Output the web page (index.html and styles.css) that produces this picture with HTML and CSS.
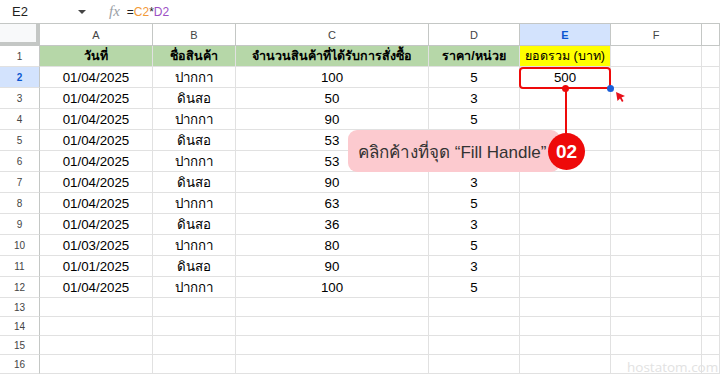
FILE: index.html
```html
<!DOCTYPE html>
<html lang="th">
<head>
  <meta charset="UTF-8" />
  <title>Fill Handle</title>
  <link rel="stylesheet" href="styles.css">
</head>
<body>

  <!-- formula bar -->
  <div class="formula-bar">
    <span class="name-box">E2</span>
    <span class="name-arrow"></span>
    <span class="fx">fx</span>
    <span class="formula">=<span class="ref-c">C2</span>*<span class="ref-d">D2</span></span>
  </div>

  <div class="sheet">
    <div class="row col-head">
      <div class="cell corner"></div>
      <div class="cell">A</div>
      <div class="cell">B</div>
      <div class="cell">C</div>
      <div class="cell">D</div>
      <div class="cell active">E</div>
      <div class="cell">F</div>
      <div class="cell"></div>
    </div>

    <div class="row head">
      <div class="cell rh">1</div>
      <div class="cell green">วันที่</div>
      <div class="cell green">ชื่อสินค้า</div>
      <div class="cell green">จำนวนสินค้าที่ได้รับการสั่งซื้อ</div>
      <div class="cell green">ราคา/หน่วย</div>
      <div class="cell yellow">ยอดรวม (บาท)</div>
      <div class="cell"></div>
      <div class="cell"></div>
    </div>

    <div class="row">
      <div class="cell rh active">2</div>
      <div class="cell">01/04/2025</div>
      <div class="cell">ปากกา</div>
      <div class="cell">100</div>
      <div class="cell">5</div>
      <div class="cell">500</div>
      <div class="cell"></div>
      <div class="cell"></div>
    </div>
    <div class="row">
      <div class="cell rh">3</div>
      <div class="cell">01/04/2025</div>
      <div class="cell">ดินสอ</div>
      <div class="cell">50</div>
      <div class="cell">3</div>
      <div class="cell"></div>
      <div class="cell"></div>
      <div class="cell"></div>
    </div>
    <div class="row">
      <div class="cell rh">4</div>
      <div class="cell">01/04/2025</div>
      <div class="cell">ปากกา</div>
      <div class="cell">90</div>
      <div class="cell">5</div>
      <div class="cell"></div>
      <div class="cell"></div>
      <div class="cell"></div>
    </div>
    <div class="row">
      <div class="cell rh">5</div>
      <div class="cell">01/04/2025</div>
      <div class="cell">ดินสอ</div>
      <div class="cell">53</div>
      <div class="cell">3</div>
      <div class="cell"></div>
      <div class="cell"></div>
      <div class="cell"></div>
    </div>
    <div class="row">
      <div class="cell rh">6</div>
      <div class="cell">01/04/2025</div>
      <div class="cell">ปากกา</div>
      <div class="cell">53</div>
      <div class="cell">5</div>
      <div class="cell"></div>
      <div class="cell"></div>
      <div class="cell"></div>
    </div>
    <div class="row">
      <div class="cell rh">7</div>
      <div class="cell">01/04/2025</div>
      <div class="cell">ดินสอ</div>
      <div class="cell">90</div>
      <div class="cell">3</div>
      <div class="cell"></div>
      <div class="cell"></div>
      <div class="cell"></div>
    </div>
    <div class="row">
      <div class="cell rh">8</div>
      <div class="cell">01/04/2025</div>
      <div class="cell">ปากกา</div>
      <div class="cell">63</div>
      <div class="cell">5</div>
      <div class="cell"></div>
      <div class="cell"></div>
      <div class="cell"></div>
    </div>
    <div class="row">
      <div class="cell rh">9</div>
      <div class="cell">01/04/2025</div>
      <div class="cell">ดินสอ</div>
      <div class="cell">36</div>
      <div class="cell">3</div>
      <div class="cell"></div>
      <div class="cell"></div>
      <div class="cell"></div>
    </div>
    <div class="row">
      <div class="cell rh">10</div>
      <div class="cell">01/03/2025</div>
      <div class="cell">ปากกา</div>
      <div class="cell">80</div>
      <div class="cell">5</div>
      <div class="cell"></div>
      <div class="cell"></div>
      <div class="cell"></div>
    </div>
    <div class="row">
      <div class="cell rh">11</div>
      <div class="cell">01/01/2025</div>
      <div class="cell">ดินสอ</div>
      <div class="cell">90</div>
      <div class="cell">3</div>
      <div class="cell"></div>
      <div class="cell"></div>
      <div class="cell"></div>
    </div>
    <div class="row">
      <div class="cell rh">12</div>
      <div class="cell">01/04/2025</div>
      <div class="cell">ปากกา</div>
      <div class="cell">100</div>
      <div class="cell">5</div>
      <div class="cell"></div>
      <div class="cell"></div>
      <div class="cell"></div>
    </div>

    <div class="row empty">
      <div class="cell rh">13</div>
      <div class="cell"></div><div class="cell"></div><div class="cell"></div>
      <div class="cell"></div><div class="cell"></div><div class="cell"></div><div class="cell"></div>
    </div>
    <div class="row empty">
      <div class="cell rh">14</div>
      <div class="cell"></div><div class="cell"></div><div class="cell"></div>
      <div class="cell"></div><div class="cell"></div><div class="cell"></div><div class="cell"></div>
    </div>
    <div class="row empty">
      <div class="cell rh">15</div>
      <div class="cell"></div><div class="cell"></div><div class="cell"></div>
      <div class="cell"></div><div class="cell"></div><div class="cell"></div><div class="cell"></div>
    </div>
    <div class="row empty">
      <div class="cell rh">16</div>
      <div class="cell"></div><div class="cell"></div><div class="cell"></div>
      <div class="cell"></div><div class="cell"></div><div class="cell"></div><div class="cell"></div>
    </div>

    <!-- annotation over the sheet -->
    <div class="select-box"></div>
    <div class="fill-handle"></div>
    <svg class="cursor" width="12" height="12" viewBox="0 0 12 12">
      <path d="M1 1 L10 5 L6.5 6.5 L8.5 10 L7 11 L5 7.5 L2.5 10 Z" fill="#e8101a"/>
    </svg>
    <div class="pin-dot"></div>
    <div class="pin-line"></div>
    <div class="callout">คลิกค้างที่จุด “Fill Handle”</div>
    <div class="step">02</div>

    <div class="watermark">hostatom.com</div>
  </div>

</body>
</html>
```

FILE: styles.css
```css
body {
  margin: 0;
  background: #fff;
  font-family: 'Liberation Sans', Arial, sans-serif;
  color: #000;
  width: 720px;
  height: 376px;
  overflow: hidden;
}

.formula-bar {
  height: 23px;
  display: flex;
  align-items: center;
  font-size: 13px;
  color: #1f1f1f;
  border-bottom: 1px solid #c4c7c5;
}

.name-box {
  width: 66px;
  padding-left: 12px;
}

.name-arrow {
  width: 0;
  height: 0;
  border-left: 4px solid transparent;
  border-right: 4px solid transparent;
  border-top: 4px solid #444;
  margin-right: 23px;
}

.fx {
  font-family: 'Liberation Serif', serif;
  font-style: italic;
  font-size: 15px;
  color: #9aa0a6;
  margin-right: 7px;
}

.formula {
  font-size: 12px;
}

.ref-c { color: #f29a38; }
.ref-d { color: #9c4fc4; }

.sheet {
  position: relative;
}

.row {
  display: grid;
  grid-template-columns: 40px 113px 83px 193px 91px 91px 91px 1fr;
  height: 21px;
}

.row.empty {
  height: 19px;
}

.cell {
  box-sizing: border-box;
  border-right: 1px solid #e1e1e1;
  border-bottom: 1px solid #e1e1e1;
  display: flex;
  align-items: center;
  justify-content: center;
  font-size: 13.3px;
  white-space: nowrap;
  overflow: hidden;
}

.col-head {
  height: 22px;
}

.col-head .cell {
  font-size: 11px;
  color: #444;
  border-color: #c4c7c5;
}

.col-head .corner {
  background: #f8f9fa;
  border-right: 4px solid #c4c7c5;
  border-bottom: 4px solid #c4c7c5;
}

.col-head .active {
  background: #d3e3fd;
  color: #0b57d0;
  font-weight: bold;
}

.rh {
  font-size: 10px;
  color: #444;
  border-right-color: #c4c7c5;
}

.rh.active {
  background: #d3e3fd;
  color: #0b57d0;
  font-weight: bold;
}

.head .cell {
  font-size: 12.5px;
  font-weight: bold;
}

.head .rh {
  font-size: 10px;
  font-weight: normal;
}

.green {
  background: #b6d7a8;
}

.yellow {
  background: #ffff00;
  font-weight: normal !important;
}

/* annotation */
.select-box {
  position: absolute;
  left: 519px;
  top: 43px;
  width: 92px;
  height: 22px;
  box-sizing: border-box;
  border: 2px solid #ee0a0a;
  border-radius: 4px;
}

.fill-handle {
  position: absolute;
  left: 607px;
  top: 61px;
  width: 7px;
  height: 7px;
  border-radius: 50%;
  background: #1a5fd8;
}

.cursor {
  position: absolute;
  left: 615px;
  top: 67px;
}

.pin-dot {
  position: absolute;
  left: 562px;
  top: 61px;
  width: 7px;
  height: 7px;
  border-radius: 50%;
  background: #ee0a0a;
}

.pin-line {
  position: absolute;
  left: 565px;
  top: 64px;
  width: 2px;
  height: 46px;
  background: #ee0a0a;
}

.callout {
  position: absolute;
  left: 348px;
  top: 106px;
  width: 212px;
  height: 42px;
  box-sizing: border-box;
  padding-left: 10px;
  border-radius: 9px;
  background: #fccacf;
  color: #333;
  font-size: 17px;
  display: flex;
  align-items: center;
}

.step {
  position: absolute;
  left: 548px;
  top: 109px;
  width: 37px;
  height: 37px;
  border-radius: 50%;
  background: #ee0a0a;
  color: #fff;
  font-size: 19px;
  font-weight: bold;
  display: flex;
  align-items: center;
  justify-content: center;
}

.watermark {
  position: absolute;
  left: 627px;
  top: 334px;
  font-family: 'Open Sans', sans-serif;
  font-size: 13.5px;
  color: #e2e2e2;
}
```
